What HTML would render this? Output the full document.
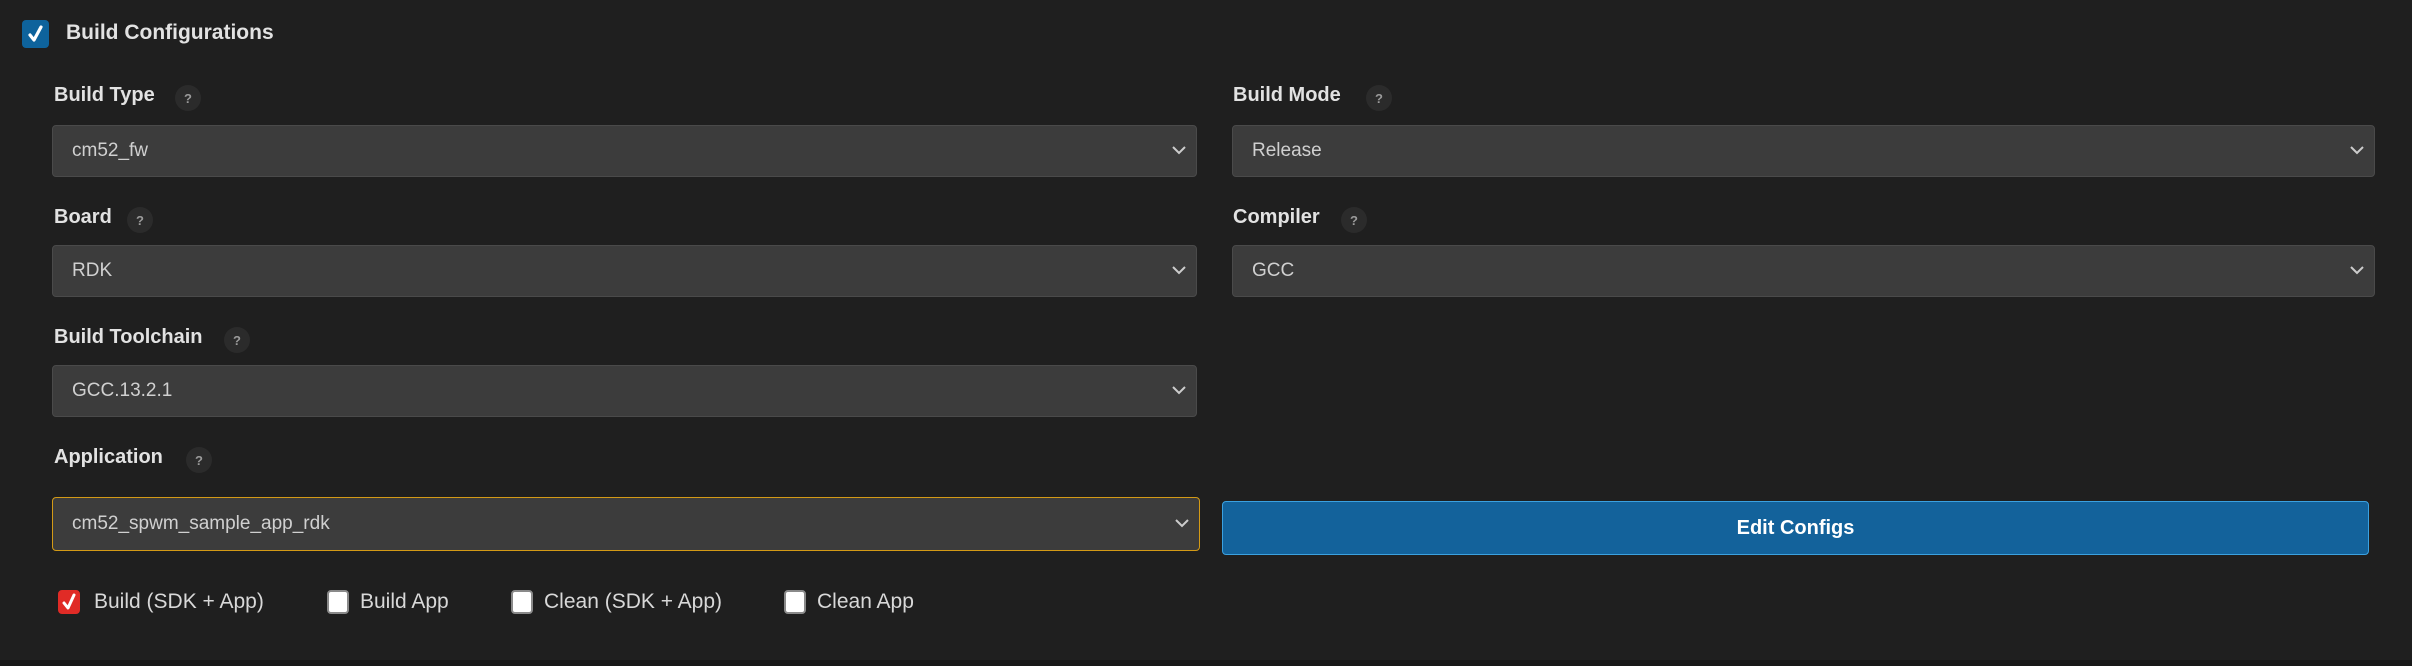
<!DOCTYPE html>
<html><head><meta charset="utf-8"><style>
*{box-sizing:border-box;margin:0;padding:0}
body{width:2412px;height:666px;background:#1f1f1f;position:relative;overflow:hidden;font-family:"Liberation Sans",Arial,sans-serif}
.abs{position:absolute}
.lbl{position:absolute;font-weight:bold;font-size:20px;color:#e2e2e2;line-height:24px}
.q{position:absolute;width:26px;height:26px;border-radius:50%;background:#2b2b2b;color:#9a9a9a;font-size:13px;font-weight:bold;text-align:center;line-height:28px}
.sel{position:absolute;background:#3c3c3c;border:1px solid #4a4a4a;border-radius:4px;color:#d0d0d0;font-size:19px;padding-left:19px;display:flex;align-items:center}
.sel svg{position:absolute;right:10px;top:50%;margin-top:-5px}
.cb{position:absolute;width:22px;height:24px;border-radius:4px;background:#fff;border:2px solid #8a8a8a}
.cbl{position:absolute;color:#d8d8d8;font-size:21px;line-height:24px}
</style></head><body>
<div class="abs" style="left:22px;top:20px;width:27px;height:28px;background:#0e639c;border-radius:4px"></div>
<svg class="abs" style="left:26px;top:24px" width="19" height="20" viewBox="0 0 19 20"><path d="M4 11 L8 16 L15 3" stroke="#fff" stroke-width="3.2" fill="none" stroke-linecap="round" stroke-linejoin="round"/></svg>
<div class="lbl" style="left:66px;top:21px;font-size:21px">Build Configurations</div>

<div class="lbl" style="left:54px;top:83px">Build Type</div><div class="q" style="left:175px;top:85px">?</div>
<div class="sel" style="left:52px;top:125px;width:1145px;height:52px">cm52_fw<svg width="14" height="9"><path d="M1 1 L7 7 L13 1" stroke="#ccc" stroke-width="2" fill="none"/></svg></div>
<div class="lbl" style="left:1233px;top:83px">Build Mode</div><div class="q" style="left:1366px;top:85px">?</div>
<div class="sel" style="left:1232px;top:125px;width:1143px;height:52px">Release<svg width="14" height="9"><path d="M1 1 L7 7 L13 1" stroke="#ccc" stroke-width="2" fill="none"/></svg></div>

<div class="lbl" style="left:54px;top:205px">Board</div><div class="q" style="left:127px;top:207px">?</div>
<div class="sel" style="left:52px;top:245px;width:1145px;height:52px">RDK<svg width="14" height="9"><path d="M1 1 L7 7 L13 1" stroke="#ccc" stroke-width="2" fill="none"/></svg></div>
<div class="lbl" style="left:1233px;top:205px">Compiler</div><div class="q" style="left:1341px;top:207px">?</div>
<div class="sel" style="left:1232px;top:245px;width:1143px;height:52px">GCC<svg width="14" height="9"><path d="M1 1 L7 7 L13 1" stroke="#ccc" stroke-width="2" fill="none"/></svg></div>

<div class="lbl" style="left:54px;top:325px">Build Toolchain</div><div class="q" style="left:224px;top:327px">?</div>
<div class="sel" style="left:52px;top:365px;width:1145px;height:52px">GCC.13.2.1<svg width="14" height="9"><path d="M1 1 L7 7 L13 1" stroke="#ccc" stroke-width="2" fill="none"/></svg></div>

<div class="lbl" style="left:54px;top:445px">Application</div><div class="q" style="left:186px;top:447px">?</div>
<div class="sel" style="left:52px;top:497px;width:1148px;height:54px;border:1.5px solid #d39a16">cm52_spwm_sample_app_rdk<svg width="14" height="9"><path d="M1 1 L7 7 L13 1" stroke="#ccc" stroke-width="2" fill="none"/></svg></div>
<div class="abs" style="left:1222px;top:501px;width:1147px;height:54px;background:#13629b;border:1.5px solid #3ba1e0;border-radius:4px;color:#fff;font-weight:bold;font-size:20px;display:flex;align-items:center;justify-content:center">Edit Configs</div>

<div class="cb" style="left:58px;top:590px;background:#e02b26;border-color:#e02b26"></div>
<svg class="abs" style="left:60px;top:592px" width="18" height="20" viewBox="0 0 18 20"><path d="M4 11 L8 16 L14 3" stroke="#fff" stroke-width="3" fill="none" stroke-linecap="round" stroke-linejoin="round"/></svg>
<div class="cbl" style="left:94px;top:590px">Build (SDK + App)</div>
<div class="cb" style="left:327px;top:590px"></div><div class="cbl" style="left:360px;top:590px">Build App</div>
<div class="cb" style="left:511px;top:590px"></div><div class="cbl" style="left:544px;top:590px">Clean (SDK + App)</div>
<div class="cb" style="left:784px;top:590px"></div><div class="cbl" style="left:817px;top:590px">Clean App</div>
<div class="abs" style="left:0;top:660px;width:2412px;height:6px;background:#181818"></div>
</body></html>
